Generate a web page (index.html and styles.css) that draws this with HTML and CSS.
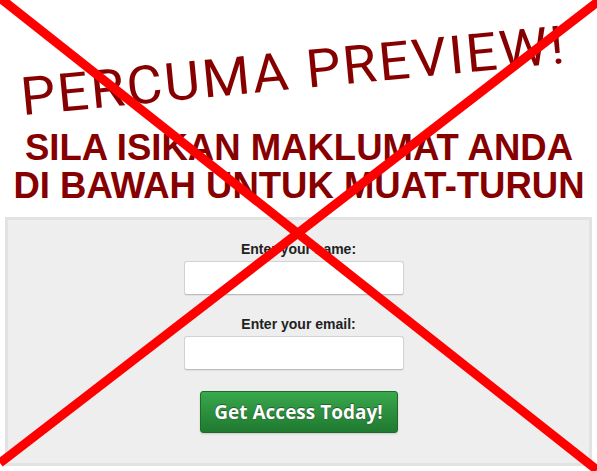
FILE: index.html
```html
<!DOCTYPE html>
<html lang="ms">
<head>
<meta charset="utf-8">
<title>Percuma Preview</title>
<link rel="stylesheet" href="styles.css">
</head>
<body>
<div class="page">
  <div class="preview"><span class="preview-text">PERCUMA PREVIEW!</span></div>
  <h2 class="headline">SILA ISIKAN MAKLUMAT ANDA<br>DI BAWAH UNTUK MUAT-TURUN</h2>
  <form class="panel">
    <div class="field">
      <label class="label" for="name">Enter your name:</label>
      <input class="input" id="name" type="text">
    </div>
    <div class="field">
      <label class="label" for="email">Enter your email:</label>
      <input class="input" id="email" type="text">
    </div>
    <button class="btn" type="button">Get Access Today!</button>
  </form>
  <svg class="cross" viewBox="0 0 597 471" width="597" height="471" aria-hidden="true">
    <line x1="0" y1="-2" x2="597" y2="470" stroke="#ff0000" stroke-width="9"/>
    <line x1="600" y1="0" x2="0" y2="463" stroke="#ff0000" stroke-width="9"/>
  </svg>
</div>
</body>
</html>
```
FILE: styles.css
```css
html, body {
  margin: 0;
  padding: 0;
  background: #ffffff;
}

.page {
  position: relative;
  width: 597px;
  height: 471px;
  overflow: hidden;
}

.preview {
  padding-top: 45px;
  height: 53px;
  text-align: center;
}

.preview-text {
  display: inline-block;
  font-family: Roboto, "Liberation Sans", sans-serif;
  font-weight: 400;
  font-size: 53px;
  line-height: 53px;
  letter-spacing: 2px;
  color: #870000;
  white-space: nowrap;
  transform: translateX(-5px) rotate(-5.5deg) scaleX(1.04);
}

.headline {
  margin: 31px 0 0 0;
  font-family: "Liberation Sans", Arial, sans-serif;
  font-weight: 700;
  font-size: 36.5px;
  line-height: 38px;
  color: #870000;
  text-align: center;
  padding-left: 1px;
}

.panel {
  margin: 12px 5px 0 5px;
  border: 3px solid #e2e2e2;
  background: #eeeeee;
  padding: 21px 0 30px 0;
  display: flex;
  flex-direction: column;
  align-items: center;
  gap: 21px;
}

.field {
  display: flex;
  flex-direction: column;
  align-items: center;
  gap: 3px;
}

.label {
  font-family: "Liberation Sans", Arial, sans-serif;
  font-weight: 700;
  font-size: 14px;
  line-height: 17px;
  color: #222222;
}

.input {
  box-sizing: border-box;
  width: 220px;
  height: 34px;
  margin-right: 10px;
  background: #ffffff;
  border: 1px solid #d2d2d2;
  border-bottom-color: #bdbdbd;
  border-radius: 3px;
  box-shadow: 0 1px 1px rgba(0, 0, 0, 0.06);
  outline: none;
}

.btn {
  box-sizing: border-box;
  width: 198px;
  height: 42px;
  padding: 0;
  border: 1px solid #1c6b2b;
  border-radius: 3px;
  background: linear-gradient(to bottom, #39a94c 0%, #2c8f3e 50%, #1f7a30 100%);
  box-shadow: 0 1px 2px rgba(0, 0, 0, 0.15);
  font-family: "Open Sans", "DejaVu Sans", sans-serif;
  font-weight: 700;
  font-size: 19px;
  color: #ffffff;
  text-shadow: 0 0 1px rgba(0, 0, 0, 0.6), 0 -1px 0 rgba(0, 0, 0, 0.3);
}

.cross {
  position: absolute;
  left: 0;
  top: 0;
  pointer-events: none;
}
```
